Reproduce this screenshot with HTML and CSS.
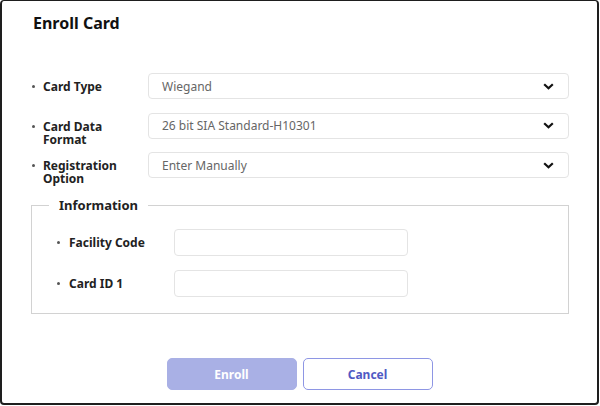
FILE: index.html
```html
<!DOCTYPE html>
<html>
<head>
<meta charset="utf-8">
<link rel="stylesheet" href="styles.css">
</head>
<body>
<div class="dialog">
  <h1 class="title">Enroll Card</h1>
  <div class="form">
    <div class="row">
      <div class="label"><span class="dot"></span><span>Card Type</span></div>
      <div class="select"><span>Wiegand</span><svg class="chev" width="11" height="7" viewBox="0 0 11 7"><path d="M1.2 1.2 L5.5 5.3 L9.8 1.2" fill="none" stroke="#111" stroke-width="2.2"/></svg></div>
    </div>
    <div class="row">
      <div class="label"><span class="dot"></span><span>Card Data<br>Format</span></div>
      <div class="select"><span>26 bit SIA Standard-H10301</span><svg class="chev" width="11" height="7" viewBox="0 0 11 7"><path d="M1.2 1.2 L5.5 5.3 L9.8 1.2" fill="none" stroke="#111" stroke-width="2.2"/></svg></div>
    </div>
    <div class="row">
      <div class="label"><span class="dot"></span><span>Registration<br>Option</span></div>
      <div class="select"><span>Enter Manually</span><svg class="chev" width="11" height="7" viewBox="0 0 11 7"><path d="M1.2 1.2 L5.5 5.3 L9.8 1.2" fill="none" stroke="#111" stroke-width="2.2"/></svg></div>
    </div>
  </div>
  <fieldset class="info">
    <legend class="legend">Information</legend>
    <div class="irow">
      <div class="label ilabel"><span class="dot"></span><span>Facility Code</span></div>
      <div class="input"></div>
    </div>
    <div class="irow">
      <div class="label ilabel"><span class="dot"></span><span>Card ID 1</span></div>
      <div class="input"></div>
    </div>
  </fieldset>
  <div class="actions">
    <button class="btn primary">Enroll</button>
    <button class="btn secondary">Cancel</button>
  </div>
</div>
</body>
</html>
```
FILE: styles.css
```css
* { box-sizing: border-box; }
html, body { margin: 0; padding: 0; background: #fff; }
body { font-family: "Noto Sans", "Open Sans", sans-serif; color: #222; }

.dialog {
  width: 599px;
  height: 405px;
  border-style: solid;
  border-color: #1e1e1e;
  border-width: 1px 2px 2px 2px;
  border-radius: 4px;
  padding: 0 28px 0 29px;
  display: flex;
  flex-direction: column;
  background: #fff;
}

.title {
  margin: 11px 0 0 2px;
  font-size: 16px;
  line-height: 22px;
  font-weight: 700;
  color: #111;
}

.form {
  margin-top: 39px;
  display: flex;
  flex-direction: column;
  gap: 13px;
}
.row { display: flex; align-items: flex-start; height: 26px; }
.row + .row { margin-top: 0.5px; }

.label {
  width: 117px;
  flex: none;
  display: flex;
  align-items: flex-start;
  font-size: 12px;
  font-weight: 700;
  line-height: 13px;
  color: #222;
  padding: 7px 0 0 1px;
}
.dot {
  width: 3px;
  height: 3px;
  border-radius: 50%;
  background: #555;
  flex: none;
  margin: 5px 8px 0 0;
}

.select {
  flex: 1;
  height: 26px;
  border: 1px solid #e4e4e4;
  border-radius: 4px;
  display: flex;
  align-items: center;
  justify-content: space-between;
  padding: 0 14px 0 13px;
  font-size: 12px;
  color: #666;
}
.chev { display: block; }

.info {
  margin: 19px 0 0 0;
  border: 1px solid #d2d2d2;
  padding: 16px 0 16px 25px;
  min-width: 0;
}
.legend {
  margin-left: -8px;
  padding: 0 10px;
  font-size: 13px;
  font-weight: 700;
  line-height: 16px;
  color: #222;
}
.irow { display: flex; align-items: flex-start; height: 27px; }
.irow + .irow { margin-top: 14px; }
.ilabel { width: 117px; padding-left: 0; }
.ilabel .dot { margin-right: 9px; }
.input {
  width: 234px;
  height: 27px;
  border: 1px solid #e4e4e4;
  border-radius: 4px;
}

.actions {
  margin-top: 44px;
  display: flex;
  justify-content: center;
  gap: 6px;
  padding-right: 1px;
}
.btn {
  width: 130px;
  height: 32px;
  border-radius: 5px;
  font-family: "Noto Sans", "Open Sans", sans-serif;
  font-size: 12px;
  font-weight: 700;
  cursor: pointer;
}
.primary {
  background: #a9b0e5;
  border: 1px solid #a9b0e5;
  color: #fff;
}
.secondary {
  background: #fff;
  border: 1px solid #8e96e4;
  color: #5059c4;
}
```
